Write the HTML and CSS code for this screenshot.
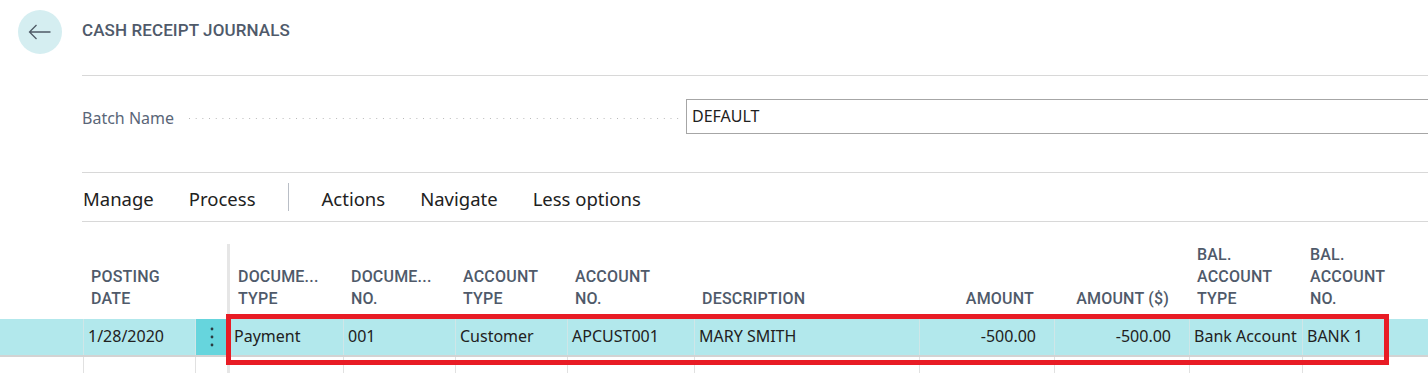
FILE: index.html
```html
<!DOCTYPE html>
<html lang="en">
<head>
    <meta charset="UTF-8">
    <title>Cash Receipt Journals</title>
    <link rel="stylesheet" href="styles.css">
</head>
<body>

<header class="page-header">
    <button class="back-button" aria-label="Back">
        <svg width="44" height="44" viewBox="0 0 44 44">
            <path d="M11.5 22 H32.5 M18.5 15 L11.5 22 L18.5 29" fill="none" stroke="#4f5a66" stroke-width="1.3"/>
        </svg>
    </button>
    <h1 class="page-title">CASH RECEIPT JOURNALS</h1>
</header>

<div class="content">
    <div class="field-row">
        <label class="field-label" for="batch-name">Batch Name</label>
        <span class="leader"></span>
        <div class="field-input" id="batch-name">DEFAULT</div>
    </div>

    <nav class="action-bar">
        <span class="action">Manage</span>
        <span class="action">Process</span>
        <span class="action-sep"></span>
        <span class="action">Actions</span>
        <span class="action">Navigate</span>
        <span class="action">Less options</span>
    </nav>
</div>

<div class="journal">
    <!-- column headers -->
    <div class="grid-row head-row">
        <div class="gutter"></div>
        <div class="th">POSTING<br>DATE</div>
        <div class="th dots-col"></div>
        <div class="th">DOCUME...<br>TYPE</div>
        <div class="th">DOCUME...<br>NO.</div>
        <div class="th">ACCOUNT<br>TYPE</div>
        <div class="th">ACCOUNT<br>NO.</div>
        <div class="th">DESCRIPTION</div>
        <div class="th num">AMOUNT</div>
        <div class="th num">AMOUNT ($)</div>
        <div class="th">BAL.<br>ACCOUNT<br>TYPE</div>
        <div class="th">BAL.<br>ACCOUNT<br>NO.</div>
    </div>

    <!-- selected line -->
    <div class="grid-row data-row selected">
        <div class="gutter"></div>
        <div class="td">1/28/2020</div>
        <div class="td dots-col">
            <svg width="4" height="20" viewBox="0 0 4 20">
                <circle cx="2" cy="2" r="1.4" fill="#2b3a40"/>
                <circle cx="2" cy="10" r="1.4" fill="#2b3a40"/>
                <circle cx="2" cy="18" r="1.4" fill="#2b3a40"/>
            </svg>
        </div>
        <div class="td">Payment</div>
        <div class="td">001</div>
        <div class="td">Customer</div>
        <div class="td">APCUST001</div>
        <div class="td">MARY SMITH</div>
        <div class="td num">-500.00</div>
        <div class="td num">-500.00</div>
        <div class="td">Bank Account</div>
        <div class="td">BANK 1</div>
    </div>

    <!-- empty line -->
    <div class="grid-row data-row empty">
        <div class="gutter"></div>
        <div class="td"></div>
        <div class="td dots-col"></div>
        <div class="td"></div>
        <div class="td"></div>
        <div class="td"></div>
        <div class="td"></div>
        <div class="td"></div>
        <div class="td"></div>
        <div class="td"></div>
        <div class="td"></div>
        <div class="td"></div>
    </div>

    <div class="highlight-box"></div>
</div>

</body>
</html>
```

FILE: styles.css
```css
body {
    margin: 0;
    width: 1428px;
    height: 373px;
    overflow: hidden;
    background-color: #fff;
    font-family: "Segoe UI", "Noto Sans", sans-serif;
    color: #212121;
}

.page-header {
    display: flex;
    align-items: flex-start;
    height: 75px;
}

.back-button {
    width: 44px;
    height: 44px;
    margin: 10px 0 0 18px;
    padding: 0;
    border: none;
    border-radius: 50%;
    background-color: #d5eef1;
}

.back-button svg {
    display: block;
}

.page-title {
    margin: 20px 0 0 20px;
    font-family: Roboto, sans-serif;
    font-size: 17px;
    font-weight: 500;
    letter-spacing: 0.1px;
    line-height: 20px;
    color: #4f5a6a;
}

.content {
    margin-left: 82px;
}

.field-row {
    display: flex;
    align-items: center;
    height: 97px;
    border-top: 1px solid #d8d8d8;
    padding-bottom: 15px;
    box-sizing: border-box;
}

.field-label {
    flex: none;
    margin-top: 2px;
    font-size: 16px;
    white-space: nowrap;
    color: #5a6678;
}

.leader {
    flex: none;
    width: 490px;
    height: 1px;
    margin: 4px 0 0 15px;
    background-image: linear-gradient(to right, #b7b7b7 1px, transparent 1px);
    background-size: 6.7px 1px;
}

.field-input {
    flex: none;
    width: 760px;
    height: 35px;
    margin-left: 7px;
    padding-left: 5px;
    box-sizing: border-box;
    border: 1px solid #a6a6a6;
    font-size: 16px;
    line-height: 33px;
}

.action-bar {
    display: flex;
    align-items: center;
    gap: 35px;
    height: 50px;
    padding: 3px 0 0 1px;
    box-sizing: border-box;
    border-top: 1px solid #d8d8d8;
    border-bottom: 1px solid #d8d8d8;
}

.action {
    font-size: 18.5px;
    color: #212121;
}

.action-sep {
    width: 1px;
    height: 28px;
    margin: -3px -2px 0 -3px;
    background-color: #b9bec6;
}

.journal {
    position: relative;
    margin-top: 22px;
}

.grid-row {
    display: grid;
    grid-template-columns: 83px 112px 35px 113px 112px 112px 127px 225px 135px 135px 113px 1fr;
}

.grid-row > div {
    box-sizing: border-box;
    min-width: 0;
}

.dots-col {
    border-right: 3px solid #e6e6e6;
}

.head-row {
    height: 75px;
    align-items: end;
}

.th {
    padding: 0 8px 9px 8px;
    font-family: Roboto, sans-serif;
    font-size: 16px;
    font-weight: 500;
    letter-spacing: 0.2px;
    line-height: 22px;
    color: #4f5a6a;
    white-space: nowrap;
}

.th.num {
    text-align: right;
    padding-right: 20px;
}

.head-row .dots-col {
    align-self: stretch;
    padding: 0;
}

.data-row .td {
    border-left: 1px solid #e1e1e1;
}

.data-row .td.dots-col + .td {
    border-left: none;
}

.selected {
    height: 36px;
    background-color: #b2e8ec;
    border-bottom: 2px solid #d3d3d3;
}

.selected .td {
    padding: 0 4px;
    font-size: 16px;
    line-height: 34px;
    white-space: nowrap;
    border-left-color: #cfe6e8;
}

.selected .td.num {
    text-align: right;
    padding-right: 18px;
}

.selected .dots-col {
    display: flex;
    align-items: center;
    justify-content: center;
    background-color: #66d5dd;
}

.empty {
    height: 40px;
}

.highlight-box {
    position: absolute;
    top: 70px;
    left: 226px;
    width: 1163px;
    height: 51px;
    box-sizing: border-box;
    border: 5px solid #e81c25;
}
```
